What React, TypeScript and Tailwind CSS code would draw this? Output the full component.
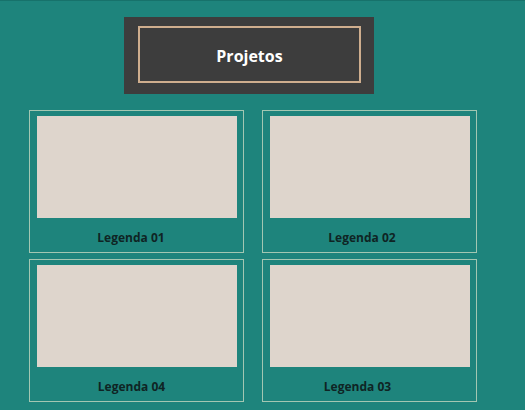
const cards = [
  { label: "Legenda 01", shift: "pr-[11px]" },
  { label: "Legenda 02", shift: "pr-[15px]" },
  { label: "Legenda 04", shift: "pr-[10px]" },
  { label: "Legenda 03", shift: "pr-[24px]" },
];

const App = () => {
  return (
    <div className="h-[410px] w-full overflow-hidden border-t border-[#17726b] bg-[#1e847c] font-['Open_Sans',sans-serif]">
      <div className="ml-[29px] w-[448px]">
        <div className="ml-[95px] mt-[16px] flex h-[77px] w-[250px] items-start bg-[#3d3d3d] pl-[14px] pt-[9px]">
          <div className="flex h-[57px] w-[223px] items-center justify-center border-2 border-[#cfae8e] pt-[2px]">
            <h1 className="text-[16px] font-bold leading-none text-white">Projetos</h1>
          </div>
        </div>

        <div className="mt-[16px] grid grid-cols-[215px_215px] gap-x-[18px] gap-y-[6px]">
          {cards.map((c) => (
            <div key={c.label} className="h-[143px] border border-[#a3c7b2] px-[7px] pt-[5px]">
              <div className="h-[102px] w-[200px] bg-[#ded5cc]" />
              <p className={`mt-[12px] text-center text-[12px] font-bold leading-4 text-[#0f2424] ${c.shift}`}>
                {c.label}
              </p>
            </div>
          ))}
        </div>
      </div>
    </div>
  );
};

export default App;
